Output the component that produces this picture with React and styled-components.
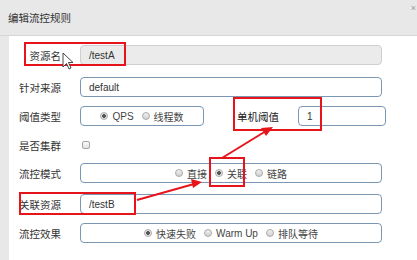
import React from "react";
import styled, { createGlobalStyle } from "styled-components";

const GlobalStyle = createGlobalStyle`
  html, body {
    margin: 0;
    padding: 0;
    background: #e8e8e8;
    font-family: "Liberation Sans", "Noto Sans CJK SC", sans-serif;
    color: #333;
  }
`;

const Page = styled.div`
  position: relative;
  width: 417px;
  height: 260px;
  overflow: hidden;
  background: #e8e8e8;
`;

const Header = styled.div`
  height: 35px;
  display: flex;
  align-items: center;
  justify-content: space-between;
  padding: 0 0 0 8px;
  border-bottom: 1px solid #d6d6d6;
  font-size: 10.5px;
  color: #333;
`;

const Close = styled.span`
  align-self: flex-start;
  margin-top: 3px;
  margin-right: 1px;
  font-size: 9px;
  color: #999;
`;

const Body = styled.div`
  margin-left: 9px;
  height: 224px;
  background: #fff;
  padding-top: 9px;
  box-sizing: border-box;
`;

const Row = styled.div`
  display: flex;
  align-items: center;
  height: 20px;
  margin-top: ${(p) => p.$mt || 0}px;
`;

const Label = styled.div`
  width: 52px;
  text-align: right;
  font-size: 10.5px;
  color: #333;
  margin-right: 19px;
  flex-shrink: 0;
  white-space: nowrap;
`;

const InlineLabel = styled(Label)`
  width: auto;
  margin: 0 19px 0 33px;
  color: #222;
`;

const Input = styled.div`
  box-sizing: border-box;
  width: ${(p) => p.$w || 302}px;
  height: 20px;
  border: 1px solid ${(p) => (p.$disabled ? "#cfcfcf" : "#7b97b3")};
  background: ${(p) => (p.$disabled ? "#ebebeb" : "#fff")};
  border-radius: 4px;
  padding-left: 8px;
  display: flex;
  align-items: center;
  font-size: 10px;
  color: #333;
`;

const Group = styled(Input)`
  justify-content: center;
  padding-left: 0;
  gap: 8px;
`;

const Option = styled.span`
  display: inline-flex;
  align-items: center;
  gap: 4px;
  font-size: 10px;
  color: #444;
  white-space: nowrap;
`;

const Dot = styled.span`
  box-sizing: border-box;
  width: 8px;
  height: 8px;
  border-radius: 50%;
  border: 1px solid #a9a9a9;
  background: ${(p) =>
    p.$on
      ? "radial-gradient(circle, #555 0 1.6px, #e6e6e6 2.2px)"
      : "linear-gradient(#f2f2f2, #cfcfcf)"};
`;

const Check = styled.span`
  box-sizing: border-box;
  width: 8px;
  height: 8px;
  margin-left: 2px;
  border: 1px solid #a5a5a5;
  border-radius: 2px;
  background: linear-gradient(#fafafa, #e2e2e2);
`;

const Radio = ({ on, children }) => (
  <Option>
    <Dot $on={on} />
    {children}
  </Option>
);

const Mark = styled.div`
  position: absolute;
  left: ${(p) => p.$x}px;
  top: ${(p) => p.$y}px;
  width: ${(p) => p.$w}px;
  height: ${(p) => p.$h}px;
  border: 2px solid #e8141b;
  box-sizing: border-box;
  pointer-events: none;
`;

const Overlay = styled.svg`
  position: absolute;
  left: 0;
  top: 0;
  pointer-events: none;
`;

export default function App() {
  return (
    <Page>
      <GlobalStyle />
      <Header>
        编辑流控规则
        <Close>×</Close>
      </Header>
      <Body>
        <Row>
          <Label>资源名</Label>
          <Input $disabled>/testA</Input>
        </Row>
        <Row $mt={12}>
          <Label>针对来源</Label>
          <Input>default</Input>
        </Row>
        <Row $mt={9}>
          <Label>阈值类型</Label>
          <Group $w={124}>
            <Radio on>QPS</Radio>
            <Radio>线程数</Radio>
          </Group>
          <InlineLabel>单机阈值</InlineLabel>
          <Input $w={88}>1</Input>
        </Row>
        <Row $mt={9}>
          <Label>是否集群</Label>
          <Check />
        </Row>
        <Row $mt={8}>
          <Label>流控模式</Label>
          <Group>
            <Radio>直接</Radio>
            <Radio on>关联</Radio>
            <Radio>链路</Radio>
          </Group>
        </Row>
        <Row $mt={11}>
          <Label>关联资源</Label>
          <Input>/testB</Input>
        </Row>
        <Row $mt={9}>
          <Label>流控效果</Label>
          <Group>
            <Radio on>快速失败</Radio>
            <Radio>Warm Up</Radio>
            <Radio>排队等待</Radio>
          </Group>
        </Row>
      </Body>

      <Mark $x={24} $y={42} $w={102} $h={24} />
      <Mark $x={233} $y={97} $w={89} $h={34} />
      <Mark $x={209} $y={157} $w={36} $h={30} />
      <Mark $x={19} $y={192} $w={117} $h={23} />

      <Overlay width="417" height="260" viewBox="0 0 417 260">
        <line x1="222" y1="158" x2="266" y2="131" stroke="#e8141b" strokeWidth="2" />
        <polygon points="273,127 261,128 266,136" fill="#e8141b" />
        <line x1="137" y1="200" x2="194" y2="184" stroke="#e8141b" strokeWidth="2" />
        <polygon points="202,182 191,179 193,188" fill="#e8141b" />
        <path
          d="M63 53 L63 67 L66.5 63.5 L69 69 L71 68 L68.5 62.5 L73 62.5 Z"
          fill="#fff"
          stroke="#333"
          strokeWidth="0.9"
          strokeLinejoin="round"
        />
      </Overlay>
    </Page>
  );
}
